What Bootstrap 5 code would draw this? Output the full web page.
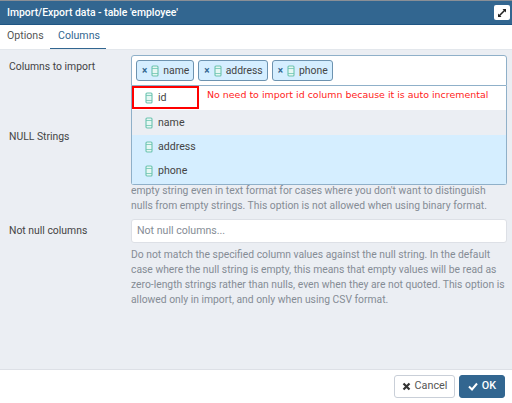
<!DOCTYPE html>
<html lang="en">
  <head>
    <meta charset="UTF-8" />
    <title>Import/Export data</title>
    <link href="https://cdn.jsdelivr.net/npm/bootstrap@5.3.0/dist/css/bootstrap.min.css" rel="stylesheet" />
    <style>
      html, body { height: 403px; overflow: hidden; }
      body { font-family: Roboto, "Liberation Sans", sans-serif; font-size: 10.4px; color: #222; background: #fff; }
      .dlg { height: 403px; border-top: 1px solid #8a8f96; }
      .dlg-head { height: 24px; background: #326690; border-bottom: 1px solid #1f5583; color: #fff; font-weight: 500; font-size: 10.4px; padding: 0 2px 0 7px; }
      .expand-btn { width: 16px; height: 15px; background: #fff; border-radius: 2px; }
      .tabs-bar { height: 24px; background: #fff; }
      .tab-item { line-height: 22px; color: #555; font-size: 10.6px; }
      .tab-first { width: 50px; padding-left: 7px; }
      .tab-item.on { color: #326690; border-bottom: 1px solid #326690; width: 56px; padding-left: 8px; height: 24px; }
      .dlg-body { height: 320px; background: #ebeef3; position: relative; border-top: 1px solid #e3e7ec; padding: 5px 5px 0 9px; }
      .lbl { width: 122px; flex: none; color: #444; font-size: 10.4px; line-height: 24px; }
      .multi { height: 31px; background: #fff; border: 1px solid #8fb0c9; border-radius: 3px 3px 0 0; padding: 0 4px; gap: 4px; }
      .chip { height: 21px; background: #d5eeff; border: 1px solid #6d93b0; border-radius: 3px; padding: 0 4px 0 5px; font-size: 10.4px; color: #444; gap: 4px; }
      .chip-x { color: #326690; font-size: 10px; font-weight: 700; line-height: 1; }
      .txt-input { height: 24px; background: #fff; border: 1px solid #dde0e6; border-radius: 3px; padding: 0 5px; color: #858c95; font-size: 10.6px; line-height: 22px; }
      .help-txt { color: #858c95; font-size: 10.33px; line-height: 15.3px; margin: 3px 0 0; }
      .row-null { margin-top: 39px; }
      .help-low { margin-top: 34px; }
      .row-notnull { margin-top: 5px; }
      .drop { position: absolute; left: 131px; top: 36px; width: 376px; background: #fff; border: 1px solid #8fb0c9; border-top: 0; border-radius: 0 0 3px 3px; }
      .drop-item { height: 24.4px; padding-left: 13px; gap: 5px; color: #444; font-size: 10.6px; }
      .drop-item.hov { background: #ebeef3; }
      .drop-item.sel { background: #d5eeff; }
      .id-box { position: absolute; left: 0; top: 0; width: 67px; height: 23px; border: 2px solid #f00; }
      .red-note { position: absolute; left: 75px; top: 2px; font-family: "DejaVu Sans", sans-serif; font-size: 9.45px; color: #f22; white-space: nowrap; }
      .dlg-foot { height: 34px; background: #fff; border-top: 1px solid #dde0e6; padding-right: 7px; gap: 4px; }
      .btn-cancel, .btn-ok { height: 23px; font-size: 10.8px; padding: 0; border-radius: 3px; gap: 4px; }
      .btn-cancel { background: #fff; border: 1px solid #c9cfd8; color: #555; width: 61px; }
      .btn-ok { background: #326690; border: 1px solid #326690; color: #fff; font-weight: 500; width: 46px; }
    </style>
  </head>
  <body>
    <svg width="0" height="0" class="d-block">
      <symbol id="col" viewBox="0 0 8 12">
        <rect x="1" y="1" width="6" height="10" rx="1" fill="#e6f7f3" stroke="#6cc4b0" stroke-width="1.1" />
        <path d="M1 3.500h6M1 8.500h6" stroke="#6cc4b0" stroke-width=".8" />
      </symbol>
    </svg>
    <div class="dlg d-flex flex-column">
      <div class="dlg-head d-flex align-items-center justify-content-between">
        <span>Import/Export data - table 'employee'</span>
        <span class="expand-btn d-flex align-items-center justify-content-center">
          <svg width="10" height="10" viewBox="0 0 10 10"><path d="M5.500 1H9v3.500L7.800 3.300 3.300 7.800 4.500 9H1V5.500L2.200 6.700 6.700 2.200z" fill="#222" /></svg>
        </span>
      </div>
      <div class="tabs-bar d-flex">
        <div class="tab-item tab-first">Options</div>
        <div class="tab-item on">Columns</div>
      </div>
      <div class="dlg-body">
        <div class="d-flex">
          <div class="lbl">Columns to import</div>
          <div class="multi flex-grow-1 d-flex align-items-center">
            <span class="chip d-inline-flex align-items-center"><span class="chip-x">×</span><svg width="8" height="12"><use href="#col" /></svg>name</span>
            <span class="chip d-inline-flex align-items-center"><span class="chip-x">×</span><svg width="8" height="12"><use href="#col" /></svg>address</span>
            <span class="chip d-inline-flex align-items-center"><span class="chip-x">×</span><svg width="8" height="12"><use href="#col" /></svg>phone</span>
          </div>
        </div>
        <div class="d-flex row-null">
          <div class="lbl">NULL Strings</div>
          <div class="flex-grow-1">
            <div class="txt-input"></div>
            <p class="help-txt help-low">empty string even in text format for cases where you don't want to distinguish<br />nulls from empty strings. This option is not allowed when using binary format.</p>
          </div>
        </div>
        <div class="d-flex row-notnull">
          <div class="lbl">Not null columns</div>
          <div class="flex-grow-1">
            <div class="txt-input">Not null columns...</div>
            <p class="help-txt mt-1">Do not match the specified column values against the null string. In the default case where the null string is empty, this means that empty values will be read as zero-length strings rather than nulls, even when they are not quoted. This option is allowed only in import, and only when using CSV format.</p>
          </div>
        </div>
        <div class="drop">
          <div class="drop-item d-flex align-items-center"><svg width="8" height="12"><use href="#col" /></svg>id</div>
          <div class="drop-item hov d-flex align-items-center"><svg width="8" height="12"><use href="#col" /></svg>name</div>
          <div class="drop-item sel d-flex align-items-center"><svg width="8" height="12"><use href="#col" /></svg>address</div>
          <div class="drop-item sel d-flex align-items-center"><svg width="8" height="12"><use href="#col" /></svg>phone</div>
          <div class="id-box"></div>
          <div class="red-note">No need to import id column because it is auto incremental</div>
        </div>
      </div>
      <div class="dlg-foot d-flex align-items-center justify-content-end">
        <button type="button" class="btn btn-cancel d-inline-flex align-items-center justify-content-center">
          <svg width="9" height="9" viewBox="0 0 9 9"><path d="M1.500 1.500l6 6M7.500 1.500l-6 6" stroke="#333" stroke-width="2.200" /></svg>Cancel
        </button>
        <button type="button" class="btn btn-ok d-inline-flex align-items-center justify-content-center">
          <svg width="10" height="9" viewBox="0 0 10 9"><path d="M1 4.500l3 3 5-6" fill="none" stroke="#fff" stroke-width="2" /></svg>OK
        </button>
      </div>
    </div>
    <script src="https://cdn.jsdelivr.net/npm/bootstrap@5.3.0/dist/js/bootstrap.bundle.min.js"></script>
  </body>
</html>
